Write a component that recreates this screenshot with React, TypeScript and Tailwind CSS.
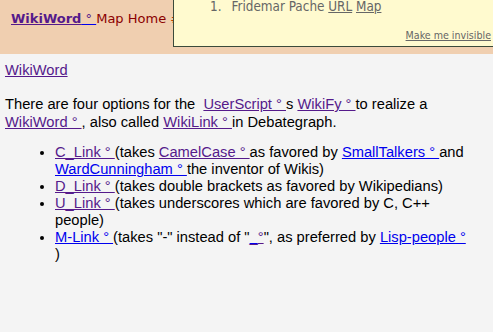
import React from "react";

const P = "text-[#551a8b] underline";
const B = "text-[#0000ee] underline";

export default function App() {
  return (
    <div className="relative w-[493px] h-[332px] overflow-hidden bg-[#f4f4f4] font-['Liberation_Sans',Arial,sans-serif] text-[14.7px] text-black">
      <div className="h-[54px] bg-[#f0cfb0] pl-[11px] pt-[9px] font-['DejaVu_Sans',Verdana,sans-serif] text-[13px] leading-[20px] whitespace-nowrap">
        <a className="text-[#551a8b] underline decoration-[#0000ee]"><span className="font-bold decoration-[#551a8b] underline">WikiWord</span> ° </a>
        <span className="text-[#8b0000]">Map Home </span>
        <span className="text-[#c04000]">#</span>
      </div>
      <div className="absolute left-[173px] top-[-2px] w-[330px] h-[49px] bg-[#fffacf] border-[1.5px] border-[#3b4a3b] font-['DejaVu_Sans_Condensed','DejaVu_Sans',sans-serif] text-[#666]">
        <div className="pl-[36px] text-[13.4px] leading-[16px] flex gap-[10px]">
          <span>1.</span>
          <span>
            Fridemar Pache <span className="underline">URL</span> <span className="underline">Map</span>
          </span>
        </div>
        <div className="absolute right-[11px] top-[29px] text-[10.6px] leading-[14px] underline">Make me invisible</div>
      </div>
      <div className="pl-[5px] pt-[8px] leading-[17px]">
        <a className={P}>WikiWord</a>
        <p className="mt-[17px] leading-[17.5px]">
          There are four options for the&nbsp; <a className={P}>UserScript ° </a>s <a className={P}>WikiFy ° </a>to realize a
          <br />
          <a className={P}>WikiWord ° </a>, also called <a className={P}>WikiLink ° </a>in Debategraph.
        </p>
        <ul className="mt-[13px] pl-[50px] list-disc leading-[17px] whitespace-nowrap">
          <li>
            <a className={P}>C_Link ° </a>(takes <a className={P}>CamelCase ° </a>as favored by <a className={B}>SmallTalkers ° </a>and
            <br />
            <a className={B}>WardCunningham ° </a>the inventor of Wikis)
          </li>
          <li>
            <a className={P}>D_Link ° </a>(takes double brackets as favored by Wikipedians)
          </li>
          <li>
            <a className={P}>U_Link ° </a>(takes underscores which are favored by C, C++
            <br />
            people)
          </li>
          <li>
            <a className={B}>M-Link ° </a>(takes "-" instead of "<a className="text-[#551a8b] underline decoration-[#0000ee]">_</a><a className={P}>°</a>", as preferred by <a className={B}>Lisp-people ° </a>
            <br />)
          </li>
        </ul>
      </div>
    </div>
  );
}
